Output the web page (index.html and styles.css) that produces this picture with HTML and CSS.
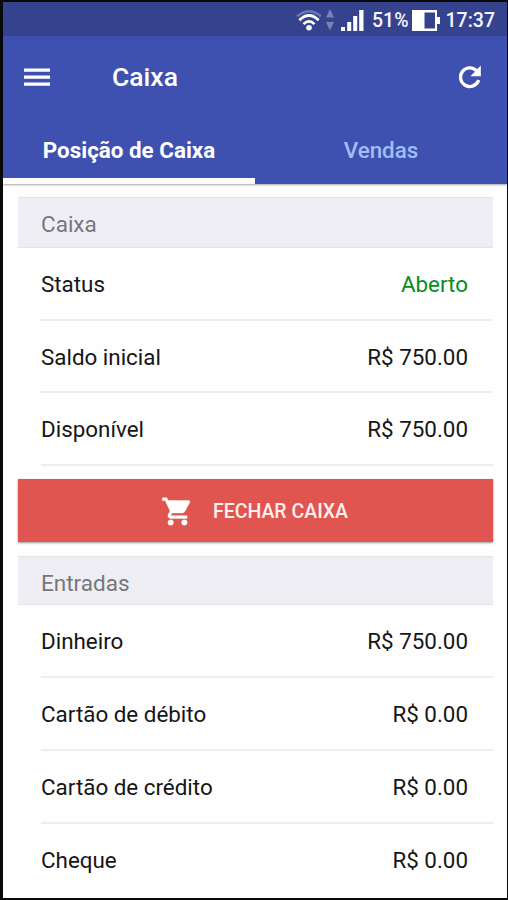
FILE: index.html
```html
<!DOCTYPE html>
<html lang="pt-BR">
<head>
<meta charset="utf-8">
<title>Caixa</title>
<link rel="stylesheet" href="styles.css">
</head>
<body>
<div class="phone">
  <div class="statusbar">
    <svg class="wifi" width="26" height="24" viewBox="0 0 27 24">
      <g fill="none" stroke-width="2.8">
        <path d="M1.2 8.2Q13.5-2 25.8 8.2" stroke="#6673b5"/>
        <path d="M3.500 12.200Q13.500 2.500 23.500 12.200M7.800 16.300Q13.500 10.500 19.200 16.300" stroke="#fff"/>
      </g>
      <circle cx="13.500" cy="20" r="2.900" fill="#fff"/>
    </svg>
    <svg class="updown" width="8" height="22" viewBox="0 0 8 22"><path d="M0 8.500 4 0l4 8.500zM0 13h8l-4 8.500z" fill="#7883b8"/></svg>
    <svg class="signal" width="23" height="21" viewBox="0 0 23 21"><path d="M0 17h4v4H0zM6.200 12h4v9h-4zM12.200 6h4v15h-4zM18.200 0h4.300v21h-4.300z" fill="#fff"/></svg>
    <span class="percent">51%</span>
    <svg class="battery" width="28" height="21" viewBox="0 0 28 21"><path d="M0 0h25v7h3v7h-3v7H0z" fill="#fff"/><path d="M12.500 2.500H23v16H12.500z" fill="#35438f"/></svg>
    <span class="clock">17:37</span>
  </div>
  <header class="header">
    <div class="toolbar">
      <svg class="menu" width="26" height="19" viewBox="0 0 26 19"><path d="M0 .5h26v3.200H0zM0 7.500h26v3.200H0zM0 14.600h26v3.200H0z" fill="#fff"/></svg>
      <h1 class="title">Caixa</h1>
      <svg class="refresh" width="34" height="34" viewBox="0 0 34 34"><path d="M24.500 12A9.300 9.300 0 1 0 25.700 20" fill="none" stroke="#fff" stroke-width="3.300"/><path d="M27.800 5.600v10.600H17.500z" fill="#fff"/></svg>
    </div>
    <nav class="tabs">
      <a class="tab active"><span>Posição de Caixa</span></a>
      <a class="tab"><span>Vendas</span></a>
    </nav>
  </header>
  <main class="content">
    <h2 class="section">Caixa</h2>
    <div class="row"><span>Status</span><span class="open">Aberto</span></div>
    <div class="row"><span>Saldo inicial</span><span>R$ 750.00</span></div>
    <div class="row"><span>Disponível</span><span>R$ 750.00</span></div>
    <button class="close">
      <svg width="33" height="33" viewBox="0 0 24 24"><path d="M7 18a2 2 0 1 0 0 4 2 2 0 0 0 0-4zM1 2v2h2l3.600 7.590-1.350 2.450C4.520 15.370 5.480 17 7 17h12v-2H7.420a.25.25 0 0 1-.22-.37L8.100 13h7.450c.75 0 1.410-.41 1.750-1.030l3.580-6.490A1 1 0 0 0 20 4H5.210l-.94-2zM17 18a2 2 0 1 0 0 4 2 2 0 0 0 0-4z" fill="#fff" stroke="#fff" stroke-width=".3"/></svg>
      <span>FECHAR CAIXA</span>
    </button>
    <h2 class="section second">Entradas</h2>
    <div class="row"><span>Dinheiro</span><span>R$ 750.00</span></div>
    <div class="row"><span>Cartão de débito</span><span>R$ 0.00</span></div>
    <div class="row"><span>Cartão de crédito</span><span>R$ 0.00</span></div>
    <div class="row last"><span>Cheque</span><span>R$ 0.00</span></div>
  </main>
</div>
</body>
</html>
```

FILE: styles.css
```css
* { box-sizing: border-box; }
body { margin: 0; font-family: Roboto, "Liberation Sans", sans-serif; }
.phone {
  width: 508px;
  height: 900px;
  overflow: hidden;
  border: solid #090909;
  border-width: 2px 1px 2px 3px;
  background: #fefefe;
}
.statusbar {
  display: flex;
  align-items: center;
  height: 34px;
  padding: 2px 12px 0 0;
  justify-content: flex-end;
  background: #35438f;
  color: #f4f6ff;
  font-size: 19.500px;
  font-weight: 500;
}
.updown { margin-left: 4px; }
.signal { margin-left: 7px; }
.percent { margin-left: 8px; }
.battery { margin-left: 3px; }
.clock { margin-left: 6px; }
.header {
  position: relative;
  height: 148px;
  background: #3f51b0;
  box-shadow: 0 1px 2px rgba(0, 0, 0, .35);
}
.toolbar {
  display: flex;
  align-items: center;
  height: 82px;
  padding: 0 20px 0 21px;
}
.title {
  margin: 0 auto 0 62px;
  padding-bottom: 2px;
  color: #fff;
  font-size: 26.500px;
  font-weight: 500;
}
.tabs { display: flex; height: 66px; }
.tab {
  flex: 1;
  padding-top: 18px;
  text-align: center;
  color: #a3bef5;
  font-size: 22.400px;
  line-height: 28px;
  font-weight: 500;
}
.active { color: #fff; font-weight: 700; border-bottom: 6px solid #fff; }
.content { padding: 13px 14px 0 15px; }
.section {
  height: 51px;
  margin: 0;
  padding-left: 23px;
  border: solid #e4e4e8;
  border-width: 1px 0;
  background: #efeef4;
  color: #77777b;
  font-size: 22.500px;
  font-weight: 400;
  line-height: 53px;
}
.row {
  display: flex;
  justify-content: space-between;
  height: 72.700px;
  margin-left: 23px;
  padding-right: 25px;
  border-bottom: 2px solid #eee;
  color: #161616;
  font-size: 22.400px;
  line-height: 72.500px;
}
.last { border-bottom: 0; }
.open { color: #088c1c; }
.close {
  display: flex;
  align-items: center;
  justify-content: center;
  gap: 19px;
  width: 100%;
  height: 63px;
  margin: 13.400px 0 14px;
  padding: 1px 2px 0 0;
  border: 0;
  background: #e15550;
  box-shadow: 0 1px 2px rgba(0, 0, 0, .4);
  color: #fff0ee;
  font: 500 19.500px Roboto, "Liberation Sans", sans-serif;
}
.second { height: 49px; line-height: 52px; }
```
